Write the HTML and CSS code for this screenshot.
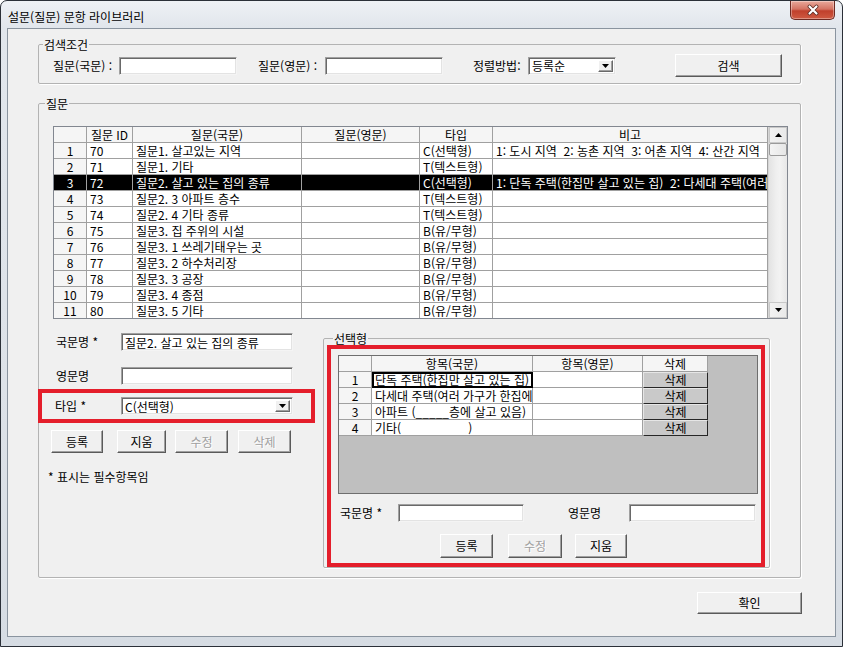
FILE: index.html
```html
<!DOCTYPE html>
<html lang="ko">
<head>
<meta charset="utf-8">
<title>설문(질문) 문항 라이브러리</title>
<link rel="stylesheet" href="styles.css">
</head>
<body>
<div class="window">
  <div class="titlebar">
    <span class="title">설문(질문) 문항 라이브러리</span>
    <button class="close" aria-label="닫기">
      <svg width="14" height="12" viewBox="0 0 14 12">
        <path d="M3.5 2.5 L10.5 9.5 M10.5 2.5 L3.5 9.5" stroke="#5a2a22" stroke-width="3.8" stroke-linecap="round"/>
        <path d="M3.5 2.5 L10.5 9.5 M10.5 2.5 L3.5 9.5" stroke="#ffffff" stroke-width="2.2" stroke-linecap="round"/>
      </svg>
    </button>
  </div>

  <div class="client">
    <fieldset class="group search">
      <legend>검색조건</legend>
      <div class="search-row">
        <label class="lbl s-l1">질문(국문) :</label>
        <input class="field s-in" type="text" value="">
        <label class="lbl s-l2">질문(영문) :</label>
        <input class="field s-in" type="text" value="">
        <label class="lbl s-l3">정렬방법:</label>
        <div class="select s-sel">
          <span class="sel-text">등록순</span>
          <span class="sel-btn"><svg width="7" height="4" viewBox="0 0 7 4"><polygon points="0,0 7,0 3.5,4" fill="#000"/></svg></span>
        </div>
        <button class="btn s-btn">검색</button>
      </div>
    </fieldset>

    <fieldset class="group questions">
      <legend>질문</legend>
      <div class="grid-box">
        <table class="qtable">
          <colgroup>
            <col class="c-no"><col class="c-id"><col class="c-ko"><col class="c-en"><col class="c-type"><col class="c-note">
          </colgroup>
          <thead>
            <tr><th></th><th>질문 ID</th><th>질문(국문)</th><th>질문(영문)</th><th>타입</th><th>비고</th></tr>
          </thead>
          <tbody>
            <tr><td class="rn">1</td><td>70</td><td>질문1. 살고있는 지역</td><td></td><td>C(선택형)</td><td class="note">1: 도시 지역  2: 농촌 지역  3: 어촌 지역  4: 산간 지역</td></tr>
            <tr><td class="rn">2</td><td>71</td><td>질문1. 기타</td><td></td><td>T(텍스트형)</td><td></td></tr>
            <tr class="sel"><td class="rn">3</td><td>72</td><td>질문2. 살고 있는 집의 종류</td><td></td><td>C(선택형)</td><td class="note">1: 단독 주택(한집만 살고 있는 집)  2: 다세대 주택(여러 가구가 한집에 살고 있는 집)</td></tr>
            <tr><td class="rn">4</td><td>73</td><td>질문2. 3 아파트 층수</td><td></td><td>T(텍스트형)</td><td></td></tr>
            <tr><td class="rn">5</td><td>74</td><td>질문2. 4 기타 종류</td><td></td><td>T(텍스트형)</td><td></td></tr>
            <tr><td class="rn">6</td><td>75</td><td>질문3. 집 주위의 시설</td><td></td><td>B(유/무형)</td><td></td></tr>
            <tr><td class="rn">7</td><td>76</td><td>질문3. 1 쓰레기태우는 곳</td><td></td><td>B(유/무형)</td><td></td></tr>
            <tr><td class="rn">8</td><td>77</td><td>질문3. 2 하수처리장</td><td></td><td>B(유/무형)</td><td></td></tr>
            <tr><td class="rn">9</td><td>78</td><td>질문3. 3 공장</td><td></td><td>B(유/무형)</td><td></td></tr>
            <tr><td class="rn">10</td><td>79</td><td>질문3. 4 종점</td><td></td><td>B(유/무형)</td><td></td></tr>
            <tr><td class="rn">11</td><td>80</td><td>질문3. 5 기타</td><td></td><td>B(유/무형)</td><td></td></tr>
          </tbody>
        </table>
        <div class="vscroll">
          <div class="sb-btn"><svg width="7" height="4" viewBox="0 0 7 4"><polygon points="3.5,0 7,4 0,4" fill="#000"/></svg></div>
          <div class="sb-thumb"></div>
          <div class="sb-track"></div>
          <div class="sb-btn"><svg width="7" height="4" viewBox="0 0 7 4"><polygon points="0,0 7,0 3.5,4" fill="#000"/></svg></div>
        </div>
      </div>

      <div class="lower">
        <div class="left-col">
          <div class="frow f1">
            <label class="lbl f-lbl">국문명 *</label>
            <input class="field f-in" type="text" value="질문2. 살고 있는 집의 종류">
          </div>
          <div class="frow f2">
            <label class="lbl f-lbl">영문명</label>
            <input class="field f-in" type="text" value="">
          </div>
          <div class="type-box">
            <label class="lbl t-lbl">타입 *</label>
            <div class="select t-sel">
              <span class="sel-text">C(선택형)</span>
              <span class="sel-btn"><svg width="7" height="4" viewBox="0 0 7 4"><polygon points="0,0 7,0 3.5,4" fill="#000"/></svg></span>
            </div>
          </div>
          <div class="btn-row">
            <button class="btn b-reg">등록</button>
            <button class="btn b-clr">지움</button>
            <button class="btn b-mod" disabled>수정</button>
            <button class="btn b-del" disabled>삭제</button>
          </div>
          <p class="note-text">* 표시는 필수항목임</p>
        </div>

        <fieldset class="group choice">
          <legend>선택형</legend>
          <div class="red-box">
            <div class="item-grid">
              <table class="itable">
                <colgroup>
                  <col class="i-no"><col class="i-ko"><col class="i-en"><col class="i-del">
                </colgroup>
                <thead>
                  <tr><th></th><th>항목(국문)</th><th>항목(영문)</th><th>삭제</th></tr>
                </thead>
                <tbody>
                  <tr><td class="rn">1</td><td class="editing">단독 주택(한집만 살고 있는 집)</td><td></td><td class="delcell"><span class="cell-btn">삭제</span></td></tr>
                  <tr><td class="rn">2</td><td>다세대 주택(여러 가구가 한집에 살고 있는 집)</td><td></td><td class="delcell"><span class="cell-btn">삭제</span></td></tr>
                  <tr><td class="rn">3</td><td>아파트 (_____층에 살고 있음)</td><td></td><td class="delcell"><span class="cell-btn">삭제</span></td></tr>
                  <tr><td class="rn">4</td><td class="pre">기타(                    )</td><td></td><td class="delcell"><span class="cell-btn">삭제</span></td></tr>
                </tbody>
              </table>
            </div>
            <div class="c-row">
              <label class="lbl c-l1">국문명 *</label>
              <input class="field c-in1" type="text" value="">
              <label class="lbl c-l2">영문명</label>
              <input class="field c-in2" type="text" value="">
            </div>
            <div class="c-btns">
              <button class="btn cb-reg">등록</button>
              <button class="btn cb-mod" disabled>수정</button>
              <button class="btn cb-clr">지움</button>
            </div>
          </div>
        </fieldset>
      </div>
    </fieldset>

    <div class="footer">
      <button class="btn ok-btn">확인</button>
    </div>
  </div>
</div>
</body>
</html>
```

FILE: styles.css
```css
* { box-sizing: border-box; }

html, body {
  margin: 0;
  padding: 0;
}

body {
  width: 843px;
  height: 647px;
  overflow: hidden;
  font-family: "Noto Sans CJK KR", "Noto Sans", sans-serif;
  font-size: 12px;
  color: #000;
  background: #ffffff;
}

/* ---------- window frame ---------- */
.window {
  width: 843px;
  height: 647px;
  border: 1px solid #2b3038;
  border-radius: 7px 7px 0 0;
  background: linear-gradient(to bottom, #eef1f5 0px, #e1e6ec 26px, #dde2e8 60%, #d6dce3 100%);
  display: flex;
  flex-direction: column;
}

.titlebar {
  height: 27px;
  flex: none;
  display: flex;
  justify-content: space-between;
  align-items: flex-start;
  padding-left: 7px;
}

.title {
  margin-top: 7px;
  line-height: 18px;
  font-size: 12px;
  color: #000;
}

.close {
  width: 45px;
  height: 19px;
  margin: 0 7px 0 0;
  padding: 0;
  border: 1px solid #6e2a22;
  border-top: none;
  border-radius: 0 0 5px 5px;
  background: linear-gradient(to bottom, #e9a99b 0%, #d47363 45%, #c0402c 55%, #cf5a42 100%);
  box-shadow: inset 0 0 0 1px rgba(255,255,255,0.35);
  display: flex;
  align-items: center;
  justify-content: center;
}

.client {
  flex: 1;
  margin: 0 6px 9px 6px;
  border: 1px solid #8a949f;
  background: #f0f0f0;
  padding: 9px 34px 0 30px;
  display: flex;
  flex-direction: column;
}

/* ---------- group boxes ---------- */
.group {
  margin: 0;
  padding: 0;
  min-width: 0;
  border: 1px solid #b3b3b3;
  border-radius: 2px;
  box-shadow: 1px 1px 0 #ffffff;
}

.group > legend {
  padding: 0 1px;
  line-height: 13px;
  font-size: 12px;
}

.search > legend { margin-left: 4px; }
.questions > legend { margin-left: 6px; }
.choice > legend { margin-left: 9px; }

/* ---------- common controls ---------- */
.lbl {
  display: inline-block;
  flex: none;
  line-height: 14px;
  white-space: nowrap;
}

.field {
  flex: none;
  height: 18px;
  margin: 0;
  padding: 0 0 0 3px;
  font: inherit;
  font-size: 12px;
  line-height: 14px;
  color: #000;
  background: #fff;
  border: 1px solid;
  border-color: #a0a0a0 #f4f4f4 #f4f4f4 #a0a0a0;
  box-shadow: inset 1px 1px 0 #696969, inset -1px -1px 0 #e3e3e3;
  outline: none;
  border-radius: 0;
}

.select {
  flex: none;
  height: 18px;
  display: flex;
  align-items: stretch;
  background: #fff;
  border: 1px solid;
  border-color: #a0a0a0 #f4f4f4 #f4f4f4 #a0a0a0;
  box-shadow: inset 1px 1px 0 #696969, inset -1px -1px 0 #e3e3e3;
  padding: 0;
}

.sel-text {
  flex: 1;
  min-width: 0;
  display: flex;
  align-items: center;
  padding-left: 3px;
  white-space: nowrap;
}

.sel-btn {
  flex: none;
  width: 15px;
  margin: 2px 2px 2px 0;
  background: #f0f0f0;
  border: 1px solid;
  border-color: #ffffff #696969 #696969 #ffffff;
  box-shadow: inset -1px -1px 0 #a0a0a0;
  display: flex;
  align-items: center;
  justify-content: center;
}

.btn {
  flex: none;
  margin: 0;
  padding: 0;
  font: inherit;
  font-size: 12px;
  line-height: 14px;
  color: #000;
  background: #f0f0f0;
  border: 1px solid;
  border-color: #ffffff #5a5a5a #5a5a5a #ffffff;
  box-shadow: inset -1px -1px 0 #a0a0a0;
  border-radius: 0;
}

.btn:disabled {
  color: #a0a0a0;
  text-shadow: 1px 1px 0 #ffffff;
}

/* ---------- search row ---------- */
.search-row {
  display: flex;
  align-items: center;
  height: 23px;
  margin: 3px 0 6px 14px;
}

.s-l1 { width: 66px; }
.s-l2 { width: 67px; margin-left: 21px; }
.s-l3 { width: 55px; margin-left: 30px; }
.s-in { width: 118px; }
.s-sel { width: 88px; }
.s-btn { width: 107px; height: 23px; margin-left: 59px; }

/* ---------- question grid ---------- */
.questions { margin-top: 13px; }

.grid-box {
  margin: 16px 0 0 14px;
  width: 735px;
  height: 193px;
  border: 1px solid #828790;
  display: flex;
  background: #fff;
}

.qtable {
  width: 714px;
  flex: none;
  align-self: flex-start;
  border-collapse: separate;
  border-spacing: 0;
  table-layout: fixed;
}

.c-no { width: 33px; }
.c-id { width: 46px; }
.c-ko { width: 169px; }
.c-en { width: 118px; }
.c-type { width: 73px; }
.c-note { width: 275px; }

.qtable th,
.qtable td {
  height: 16px;
  padding: 0 3px;
  line-height: 15px;
  font-size: 12px;
  font-weight: normal;
  text-align: left;
  white-space: nowrap;
  overflow-x: clip;
  overflow-y: visible;
  border-right: 1px solid #a0a0a0;
  border-bottom: 1px solid #a0a0a0;
}

.qtable th {
  text-align: center;
  background: #f5f5f5;
}

.qtable td.rn {
  text-align: center;
  background: #f5f5f5;
  padding: 0;
}

.qtable td.note { white-space: pre; }

.qtable tbody tr:last-child td {
  border-bottom: none;
  height: 15px;
}

.qtable tr.sel td,
.qtable tr.sel td.rn {
  background: #000;
  color: #fff;
}

.vscroll {
  flex: 1;
  display: flex;
  flex-direction: column;
  background: linear-gradient(to right, #e3e3e3, #efefef 40%, #f2f2f2 60%, #e7e7e7);
  border-left: 1px solid #d6d6d6;
}

.sb-btn {
  height: 16px;
  flex: none;
  display: flex;
  align-items: center;
  justify-content: center;
  background: linear-gradient(to right, #f2f2f2, #e9e9e9);
  border: 1px solid #c8c8c8;
}

.sb-thumb {
  height: 13px;
  flex: none;
  background: linear-gradient(to right, #f4f4f4, #e6e6e6);
  border: 1px solid #9a9a9a;
  border-radius: 2px;
}

.sb-track { flex: 1; }

/* ---------- lower part ---------- */
.lower {
  display: flex;
  align-items: flex-start;
  margin: 13px 0 9px 0;
}

.left-col {
  width: 284px;
  flex: none;
  display: flex;
  flex-direction: column;
}

.frow {
  display: flex;
  align-items: center;
  height: 18px;
}

.f1 { margin-top: 1px; }
.f2 { margin-top: 16px; }

.f-lbl { width: 82px; padding-left: 17px; }
.f-in { width: 172px; }

.type-box {
  margin: 4px 0 0 -1px;
  width: 277px;
  height: 34px;
  border: 4px solid #e41e2b;
  display: flex;
  align-items: center;
}

.t-lbl { width: 79px; padding-left: 13px; }
.t-sel { width: 172px; }

.btn-row {
  display: flex;
  margin: 7px 0 0 12px;
  height: 23px;
}

.btn-row .btn { height: 23px; }
.b-reg { width: 52px; }
.b-clr { width: 49px; margin-left: 14px; }
.b-mod { width: 53px; margin-left: 9px; }
.b-del { width: 53px; margin-left: 10px; }

.note-text {
  margin: 17px 0 0 0;
  padding-left: 9px;
  line-height: 14px;
}

/* ---------- choice group ---------- */
.choice {
  width: 447px;
  flex: none;
}

.red-box {
  margin: 0 4px 0 3px;
  height: 222px;
  border: 4px solid #e41e2b;
  display: flex;
  flex-direction: column;
}

.item-grid {
  margin: 6px 3px 0 7px;
  height: 139px;
  flex: none;
  border: 1px solid #6e6e6e;
  background: #bfbfbf;
}

.itable {
  width: 369px;
  border-collapse: separate;
  border-spacing: 0;
  table-layout: fixed;
}

.i-no { width: 33px; }
.i-ko { width: 161px; }
.i-en { width: 110px; }
.i-del { width: 65px; }

.itable th,
.itable td {
  height: 16px;
  padding: 0 3px;
  line-height: 15px;
  font-size: 12px;
  font-weight: normal;
  text-align: left;
  white-space: nowrap;
  overflow-x: clip;
  overflow-y: visible;
  background: #fff;
  border-right: 1px solid #a0a0a0;
  border-bottom: 1px solid #a0a0a0;
}

.itable th {
  text-align: center;
  background: #f5f5f5;
}

.itable td.rn {
  text-align: center;
  padding: 0;
  background: #f5f5f5;
}

.itable td.editing {
  outline: 2px solid #000;
  outline-offset: -2px;
}

.itable td.pre { white-space: pre; }

.itable td.delcell {
  padding: 0;
  background: #bfbfbf;
  border-right: none;
  border-bottom: none;
}

.cell-btn {
  display: block;
  height: 16px;
  line-height: 14px;
  text-align: center;
  background: #c9c9c9;
  border: 1px solid;
  border-color: #e6e6e6 #262626 #262626 #e6e6e6;
}

.c-row {
  display: flex;
  align-items: center;
  height: 18px;
  margin: 10px 0 0 9px;
}

.c-l1 { width: 58px; }
.c-in1 { width: 126px; }
.c-l2 { width: 61px; margin-left: 44px; }
.c-in2 { width: 127px; }

.c-btns {
  display: flex;
  height: 24px;
  margin: 12px 0 0 109px;
}

.c-btns .btn { height: 24px; }
.cb-reg { width: 53px; }
.cb-mod { width: 54px; margin-left: 15px; }
.cb-clr { width: 52px; margin-left: 13px; }

/* ---------- footer ---------- */
.footer {
  display: flex;
  justify-content: flex-end;
  margin: 14px -1px 0 0;
}

.ok-btn {
  width: 105px;
  height: 22px;
}
```
